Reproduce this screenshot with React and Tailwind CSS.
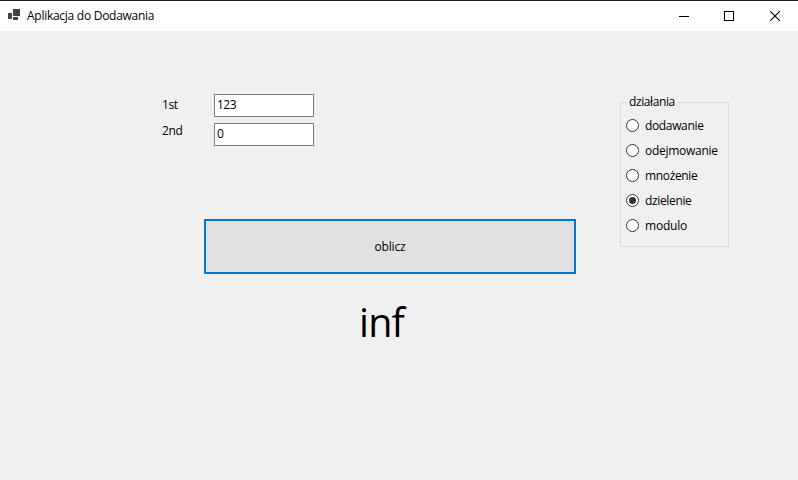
import React, { useState } from "react";

const operations = [
  { name: "dodawanie", spacing: "tracking-[-0.35px]" },
  { name: "odejmowanie", spacing: "tracking-[-0.28px]" },
  { name: "mnożenie", spacing: "tracking-[-0.35px]" },
  { name: "dzielenie", spacing: "tracking-[-0.35px]" },
  { name: "modulo", spacing: "tracking-[-0.2px]" },
];

function TitleBar() {
  return (
    <header className="flex h-[31px] items-start border-t border-[#202020] bg-white">
      <svg className="ml-[8px] mt-[8px] h-[12px] w-[13px]" viewBox="0 0 13 12" fill="#424242" shapeRendering="crispEdges">
        <rect x="0" y="4" width="4" height="6" />
        <rect x="5" y="0" width="7" height="7" />
        <rect x="5" y="8" width="5" height="3" />
      </svg>
      <h1 className="ml-[6px] mt-[7px] h-[16px] whitespace-nowrap text-[12px] leading-[16px] tracking-[-0.27px]">
        Aplikacja do Dodawania
      </h1>
      <div className="ml-auto flex">
        <button className="flex h-[29px] w-[45px] items-center justify-center" aria-label="Minimalizuj">
          <svg className="h-[10px] w-[10px]" viewBox="0 0 10 10" shapeRendering="crispEdges">
            <rect y="5" width="10" height="1" />
          </svg>
        </button>
        <button className="flex h-[29px] w-[46px] items-center justify-center" aria-label="Maksymalizuj">
          <svg className="h-[10px] w-[10px]" viewBox="0 0 10 10" fill="none" stroke="#000">
            <rect x=".5" y=".5" width="9" height="9" />
          </svg>
        </button>
        <button className="flex h-[29px] w-[46px] items-center justify-center" aria-label="Zamknij">
          <svg className="h-[10px] w-[10px]" viewBox="0 0 10 10" fill="none" stroke="#000" strokeWidth="1.1">
            <path d="M0 0L10 10M10 0L0 10" />
          </svg>
        </button>
      </div>
    </header>
  );
}

function NumberField({ label, value, labelClass }) {
  return (
    <div className="flex h-[23px]">
      <label className={"w-[52px] leading-[16px] tracking-[-0.4px] " + labelClass}>{label}</label>
      <div className="w-[100px] border border-[#7a7a7a] bg-white pl-[2px] pt-[2px] leading-[16px] tracking-[-0.5px]">
        {value}
      </div>
    </div>
  );
}

export default function App() {
  const [selected, setSelected] = useState("dzielenie");
  return (
    <div className="flex h-[480px] w-[798px] flex-col overflow-hidden bg-[#f0f0f0] font-['Open_Sans','Noto_Sans',sans-serif] text-[12px] text-black">
      <TitleBar />
      <main className="flex flex-1 items-start">
        <section className="w-[620px] pt-[63px]">
          <div className="ml-[162px] flex flex-col gap-[6px]">
            <NumberField label="1st" value="123" labelClass="pt-[3px]" />
            <NumberField label="2nd" value="0" labelClass="pt-0" />
          </div>
          <button className="ml-[204px] mt-[73px] flex h-[55px] w-[372px] items-center justify-center border-2 border-[#0078d7] bg-[#e1e1e1] leading-[16px] tracking-[-0.15px]">
            oblicz
          </button>
          <output className="ml-[359px] mt-[20px] block text-[39.5px] leading-[56px] tracking-[-0.8px]">inf</output>
        </section>
        <fieldset className="mt-[63px] h-[153px] w-[109px] border border-[#dcdcdc] pl-[5px]">
          <legend className="ml-[1px] h-[16px] w-[50px] whitespace-nowrap pl-[2px] leading-[16px] tracking-[-0.4px]">działania</legend>
          <div className="flex flex-col pt-[3px]">
            {operations.map(({ name, spacing }) => (
              <label key={name} className="flex h-[25px] items-center gap-[6px]">
                <input type="radio" name="operation" className="sr-only" checked={selected === name} onChange={() => setSelected(name)} />
                <svg className="h-[13px] w-[13px] shrink-0" viewBox="0 0 13 13">
                  <circle cx="6.5" cy="6.5" r="6" fill="white" stroke="#333" />
                  {selected === name && <circle cx="6.5" cy="6.5" r="3.5" fill="#333" />}
                </svg>
                <span className={"leading-[16px] " + spacing}>{name}</span>
              </label>
            ))}
          </div>
        </fieldset>
      </main>
    </div>
  );
}
